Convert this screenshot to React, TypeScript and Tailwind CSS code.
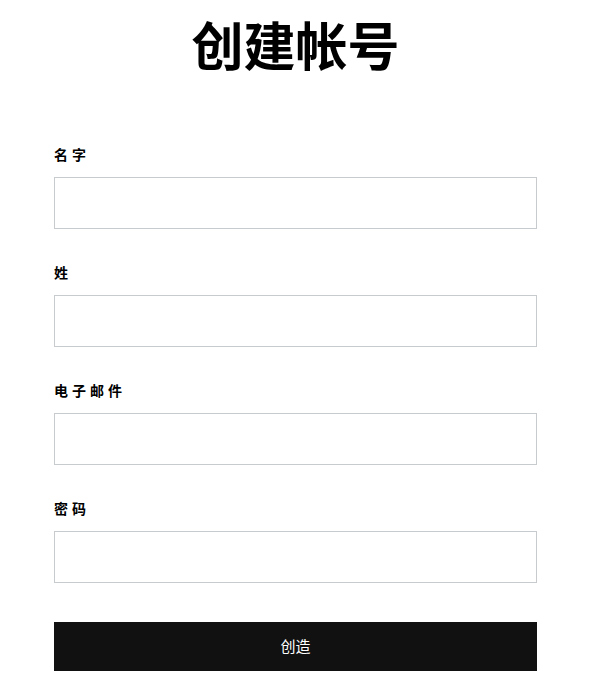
const fields = [
  { label: "名字", type: "text" },
  { label: "姓", type: "text" },
  { label: "电子邮件", type: "email" },
  { label: "密码", type: "password" },
];

export default function App() {
  return (
    <div
      className="min-h-[700px] bg-white text-black"
      style={{ fontFamily: '"Noto Sans CJK SC", "Liberation Sans", sans-serif' }}
    >
      <div className="ml-[54px] w-[483px] pt-[10px]">
        <h1 className="text-center text-[52px] font-bold leading-[68px]">创建帐号</h1>
        <form className="mt-[66px] flex flex-col">
          {fields.map((f) => (
            <label key={f.label} className="mb-[33px] flex flex-col">
              <span className="text-[14px] font-bold leading-[20px] tracking-[4px]">{f.label}</span>
              <input
                type={f.type}
                className="mt-[13px] h-[52px] w-full border border-[#c8cbce] px-3 outline-none"
              />
            </label>
          ))}
          <button
            type="button"
            className="mt-[6px] h-[49px] w-full bg-[#111111] text-[15px] text-white"
          >
            创造
          </button>
        </form>
      </div>
    </div>
  );
}
